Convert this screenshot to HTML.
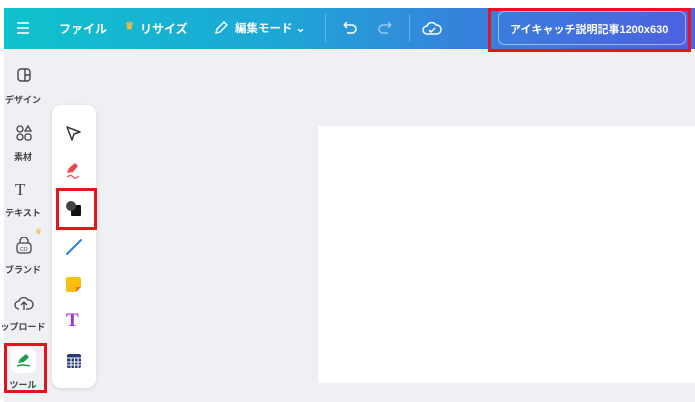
<!DOCTYPE html>
<html><head><meta charset="utf-8"><style>
*{margin:0;padding:0;box-sizing:border-box}
body{width:695px;height:402px;overflow:hidden;background:#fff;font-family:"Liberation Sans","Noto Sans CJK JP",sans-serif;position:relative}
.bg{position:absolute;left:4px;top:50px;right:0;bottom:0;background:#eff0f4}
.bar{position:absolute;left:4px;top:8px;right:0;height:41px;background:linear-gradient(90deg,#0ec2cd 0%,#1ea6d6 40%,#3584dc 65%,#4f5fe0 100%);color:#fff;font-weight:bold;font-size:12px}
.bar span{position:absolute;top:12px}
.red{position:absolute;border:3px solid #e8141b}
.lab{position:absolute;font-size:9px;color:#444;font-weight:bold;width:50px;text-align:center}
.panel{position:absolute;left:52px;top:105px;width:44px;height:283px;background:#fff;border-radius:9px;box-shadow:0 1px 4px rgba(0,0,0,.12)}
.canvas{position:absolute;left:318px;top:126px;width:377px;height:257px;background:#fff}
</style></head><body>
<div class="bg"></div>
<div class="bar">
<svg style="position:absolute;left:12px;top:13px" width="14" height="14"><path d="M1 2H13M1 7H13M1 12H13" stroke="#fff" stroke-width="1.6"/></svg>
<span style="left:55px">ファイル</span>
<span style="left:121px;color:#f5b942;font-size:10px;top:13px">♛</span>
<span style="left:136px">リサイズ</span>
<svg style="position:absolute;left:209px;top:12px" width="16" height="16"><path d="M3 13L4 9L11 2L14 5L7 12Z" fill="none" stroke="#fff" stroke-width="1.4"/></svg>
<span style="left:231px;font-size:11.5px">編集モード ⌄</span>
<div style="position:absolute;left:321px;top:6px;width:1px;height:28px;background:rgba(255,255,255,.3)"></div>
<svg style="position:absolute;left:337px;top:12px" width="18" height="16"><path d="M3 5H11A4 4 0 0 1 11 13H6M3 5L6 2M3 5L6 8" fill="none" stroke="#fff" stroke-width="1.5"/></svg>
<svg style="position:absolute;left:372px;top:12px" width="18" height="16"><path d="M15 5H7A4 4 0 0 0 7 13H12M15 5L12 2M15 5L12 8" fill="none" stroke="rgba(255,255,255,.5)" stroke-width="1.5"/></svg>
<div style="position:absolute;left:405px;top:6px;width:1px;height:28px;background:rgba(255,255,255,.3)"></div>
<svg style="position:absolute;left:418px;top:11px" width="20" height="18"><path d="M5 15A4 4 0 0 1 5 7A5 5 0 0 1 14 6A4 4 0 0 1 15 15Z" fill="none" stroke="#fff" stroke-width="1.5"/><path d="M7 11L9 13L13 9" fill="none" stroke="#fff" stroke-width="1.5"/></svg>
<div style="position:absolute;left:494px;top:3px;width:188px;height:34px;border:1px solid rgba(255,255,255,.5);border-radius:6px"></div>
<span style="left:506px;font-size:11px;top:13px">アイキャッチ説明記事1200x630</span>
</div>
<div class="red" style="left:488px;top:8px;width:203px;height:44px"></div>
<svg style="position:absolute;left:16px;top:67px" width="16" height="16"><rect x="2" y="2" width="12" height="12" rx="3" fill="none" stroke="#444" stroke-width="1.4"/><path d="M9 2V14M9 8H14" stroke="#444" stroke-width="1.4"/></svg>
<div class="lab" style="left:-2px;top:93px">デザイン</div>
<svg style="position:absolute;left:15px;top:124px" width="18" height="18"><circle cx="5" cy="5" r="3" fill="none" stroke="#444" stroke-width="1.3"/><path d="M13 2L16 7H10Z" fill="none" stroke="#444" stroke-width="1.3"/><circle cx="5" cy="13" r="3" fill="none" stroke="#444" stroke-width="1.3"/><rect x="10" y="10" width="6" height="6" rx="2" fill="none" stroke="#444" stroke-width="1.3"/></svg>
<div class="lab" style="left:-2px;top:150px">素材</div>
<div style="position:absolute;left:15px;top:180px;font-size:17px;color:#444;font-family:'Liberation Serif',serif">T</div>
<div class="lab" style="left:-2px;top:206px">テキスト</div>
<div style="position:absolute;left:35px;top:227px;color:#f5b942;font-size:8px">♛</div>
<svg style="position:absolute;left:15px;top:237px" width="18" height="18"><rect x="2" y="6" width="14" height="10" rx="3" fill="none" stroke="#444" stroke-width="1.3"/><path d="M5 6V4A4 4 0 0 1 13 4V6" fill="none" stroke="#444" stroke-width="1.3"/><text x="5" y="14" font-size="5" fill="#444">CO</text></svg>
<div class="lab" style="left:-2px;top:263px">ブランド</div>
<svg style="position:absolute;left:14px;top:294px" width="20" height="18"><path d="M5 15A4 4 0 0 1 5 7A5 5 0 0 1 14 6A4 4 0 0 1 15 15H12" fill="none" stroke="#444" stroke-width="1.3"/><path d="M10 16V9M7 11L10 8L13 11" fill="none" stroke="#444" stroke-width="1.3"/></svg>
<div class="lab" style="left:-4px;top:320px;width:54px;white-space:nowrap">ップロード</div>
<div style="position:absolute;left:11px;top:348px;width:25px;height:25px;background:#fff;border-radius:6px"></div>
<svg style="position:absolute;left:14px;top:351px" width="20" height="20"><path d="M4 12L6 8L12 3L15 6L10 11Z" fill="#1a9e4f"/><path d="M3 15Q8 13 16 15" stroke="#1a9e4f" stroke-width="1.6" fill="none"/></svg>
<div class="lab" style="left:-2px;top:378px">ツール</div>
<div class="red" style="left:4px;top:343px;width:43px;height:50px"></div>
<div class="panel"></div>
<svg style="position:absolute;left:64px;top:124px" width="18" height="18"><path d="M3 3L16 8L10 10L8 16Z" fill="none" stroke="#333" stroke-width="1.5" stroke-linejoin="round"/></svg>
<svg style="position:absolute;left:64px;top:161px" width="20" height="20"><path d="M3 12L5 7L11 2L14 5L9 11Z" fill="#f04452"/><path d="M3 16Q7 13 9 16T15 15" stroke="#f04452" stroke-width="1.2" fill="none"/></svg>
<svg style="position:absolute;left:64px;top:199px" width="20" height="20"><rect x="7" y="6" width="10" height="11" rx="1" fill="#111"/><circle cx="7" cy="7" r="5" fill="#444"/></svg>
<div class="red" style="left:56px;top:188px;width:41px;height:42px"></div>
<svg style="position:absolute;left:64px;top:237px" width="20" height="20"><path d="M3 17L17 3" stroke="#2d7fe0" stroke-width="2" stroke-linecap="round"/></svg>
<svg style="position:absolute;left:64px;top:275px" width="20" height="20"><path d="M4 2H15A2 2 0 0 1 17 4V12L12 17H4A2 2 0 0 1 2 15V4A2 2 0 0 1 4 2Z" fill="#fbbf10"/><path d="M12 17V13A1 1 0 0 1 13 12H17Z" fill="#f06a1e"/></svg>
<div style="position:absolute;left:66px;top:310px;font-size:19px;font-weight:bold;color:#9b35e8;font-family:'Liberation Serif',serif">T</div>
<svg style="position:absolute;left:65px;top:352px" width="18" height="18"><rect x="2" y="2" width="14" height="14" rx="2" fill="#243a7a"/><path d="M2 6H16M2 10H16M2 13H16M6 6V16M9.5 6V16M13 6V16" stroke="#fff" stroke-width="1"/></svg>
<div class="canvas"></div>
</body></html>
